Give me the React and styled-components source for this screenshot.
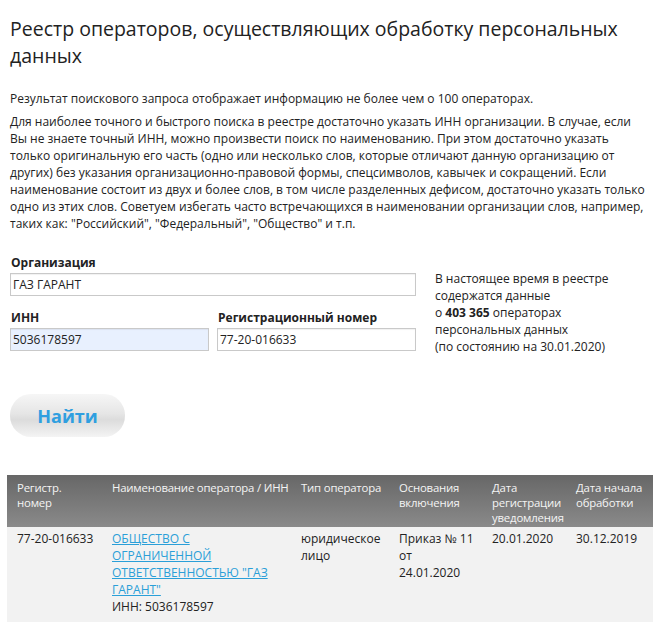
import React from "react";
import styled, { createGlobalStyle } from "styled-components";

const GlobalStyle = createGlobalStyle`
  html, body {
    margin: 0;
    padding: 0;
    background: #fff;
    overflow: hidden;
  }
  body {
    font-family: "Open Sans", "Liberation Sans", sans-serif;
    color: #222;
  }
`;

const Page = styled.div`
  width: 653px;
  padding: 15px 0 0 10px;
  box-sizing: border-box;
`;

const Title = styled.h1`
  margin: 0;
  font-size: 19.5px;
  font-weight: 400;
  line-height: 27px;
  color: #222;
`;

const Text = styled.p`
  margin: ${(p) => p.$top || 0}px 0 0 0;
  font-size: 12px;
  line-height: 17px;
  padding-right: 8px;
`;

const Form = styled.div`
  display: flex;
  margin-top: 22px;
  gap: 19px;
`;

const Fields = styled.div`
  width: 406px;
  display: grid;
  grid-template-columns: 199px 199px;
  column-gap: 8px;
`;

const Field = styled.label`
  display: flex;
  flex-direction: column;
  grid-column: ${(p) => (p.$wide ? "1 / 3" : "auto")};
  margin-bottom: ${(p) => (p.$wide ? 9 : 0)}px;
`;

const Label = styled.span`
  font-size: 12px;
  font-weight: 700;
  line-height: 17px;
  margin-bottom: 2px;
  margin-left: 1px;
`;

const Input = styled.input`
  box-sizing: border-box;
  height: 23px;
  width: 100%;
  border: 1px solid #c9c9c9;
  box-shadow: inset 0 1px 1px rgba(0, 0, 0, 0.06);
  background: ${(p) => (p.$filled ? "#e8f0fe" : "#fff")};
  font-family: "Open Sans", "Liberation Sans", sans-serif;
  font-size: 12px;
  color: #222;
  padding: 0 2px;
  outline: none;
`;

const Info = styled.div`
  margin-top: 16px;
  font-size: 12px;
  line-height: 17px;
  color: #222;

  b {
    font-weight: 700;
  }
`;

const Button = styled.button`
  margin-top: 39px;
  width: 115px;
  height: 43px;
  border: none;
  border-radius: 21px;
  background: linear-gradient(
    to bottom,
    #f6f6f6 0%,
    #e6e6e6 45%,
    #dcdcdc 60%,
    #f4f4f4 100%
  );
  color: #2f9fe0;
  font-family: "Open Sans", "Liberation Sans", sans-serif;
  font-size: 18px;
  font-weight: 700;
  padding: 0;
  cursor: pointer;
`;

const Table = styled.table`
  margin: 38px 0 0 -3px;
  width: 646px;
  border-collapse: collapse;
  table-layout: fixed;
  font-size: 12px;
`;

const Th = styled.th`
  box-sizing: border-box;
  width: ${(p) => p.$w}px;
  text-align: left;
  vertical-align: top;
  font-size: 11.4px;
  letter-spacing: -0.2px;
  font-weight: 400;
  line-height: 15px;
  padding: 5px 0 2px 10px;
  color: #f4f4f4;
`;

const HeadRow = styled.tr`
  background: linear-gradient(to bottom, #676767 0%, #7a7a7a 55%, #8a8a8a 100%);
`;

const BodyRow = styled.tr`
  background: #f2f2f2;
`;

const Td = styled.td`
  vertical-align: top;
  line-height: 17px;
  padding: 3px 4px 9px 10px;
  color: #222;
`;

const OperatorLink = styled.a`
  color: #2a9fd8;
  text-decoration: underline;
`;

export default function App() {
  return (
    <Page>
      <GlobalStyle />
      <Title>Реестр операторов, осуществляющих обработку персональных данных</Title>
      <Text $top={21}>
        Результат поискового запроса отображает информацию не более чем о 100 операторах.
      </Text>
      <Text $top={6}>
        Для наиболее точного и быстрого поиска в реестре достаточно указать ИНН организации. В
        случае, если Вы не знаете точный ИНН, можно произвести поиск по наименованию. При этом
        достаточно указать только оригинальную его часть (одно или несколько слов, которые
        отличают данную организацию от других) без указания организационно-правовой формы,
        спецсимволов, кавычек и сокращений. Если наименование состоит из двух и более слов, в том
        числе разделенных дефисом, достаточно указать только одно из этих слов. Советуем избегать
        часто встречающихся в наименовании организации слов, например, таких как: "Российский",
        "Федеральный", "Общество" и т.п.
      </Text>

      <Form>
        <Fields>
          <Field $wide>
            <Label>Организация</Label>
            <Input defaultValue="ГАЗ ГАРАНТ" />
          </Field>
          <Field>
            <Label>ИНН</Label>
            <Input $filled defaultValue="5036178597" />
          </Field>
          <Field>
            <Label>Регистрационный номер</Label>
            <Input defaultValue="77-20-016633" />
          </Field>
        </Fields>
        <Info>
          В настоящее время в реестре
          <br />
          содержатся данные
          <br />о <b>403 365</b> операторах
          <br />
          персональных данных
          <br />
          (по состоянию на 30.01.2020)
        </Info>
      </Form>

      <Button>Найти</Button>

      <Table>
        <thead>
          <HeadRow>
            <Th $w={95}>
              Регистр.
              <br />
              номер
            </Th>
            <Th $w={189}>Наименование оператора / ИНН</Th>
            <Th $w={98}>Тип оператора</Th>
            <Th $w={93}>Основания включения</Th>
            <Th $w={84}>Дата регистрации уведомления</Th>
            <Th $w={87}>Дата начала обработки</Th>
          </HeadRow>
        </thead>
        <tbody>
          <BodyRow>
            <Td>77-20-016633</Td>
            <Td>
              <OperatorLink href="#">
                ОБЩЕСТВО С ОГРАНИЧЕННОЙ ОТВЕТСТВЕННОСТЬЮ "ГАЗ ГАРАНТ"
              </OperatorLink>
              <br />
              ИНН: 5036178597
            </Td>
            <Td>юридическое лицо</Td>
            <Td>
              Приказ № 11 от
              <br />
              24.01.2020
            </Td>
            <Td>20.01.2020</Td>
            <Td>30.12.2019</Td>
          </BodyRow>
        </tbody>
      </Table>
    </Page>
  );
}
